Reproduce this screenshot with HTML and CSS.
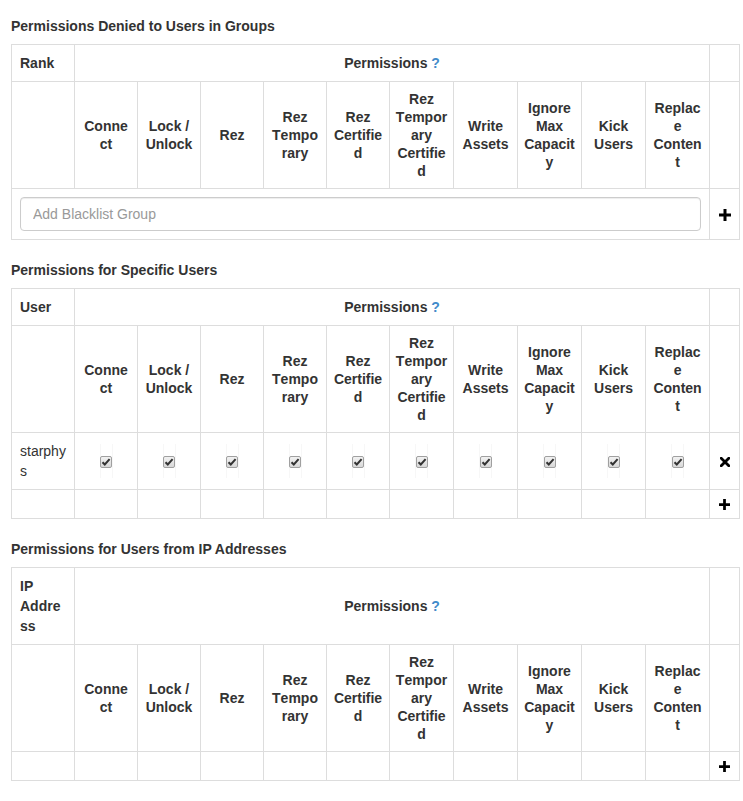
FILE: index.html
```html
<!DOCTYPE html>
<html lang="en">
<head>
<meta charset="utf-8">
<title>Permissions</title>
<link rel="stylesheet" href="styles.css">
</head>
<body>
<div class="page">

  <h4 class="section-title">Permissions Denied to Users in Groups</h4>
  <table class="perm-table">
    <colgroup>
      <col class="c63"><col class="c63"><col class="c63"><col class="c63"><col class="c63"><col class="c63">
      <col class="c64"><col class="c64"><col class="c64"><col class="c64"><col class="c64"><col class="c30">
    </colgroup>
    <thead>
      <tr class="head-top">
        <th class="name-col">Rank</th>
        <th colspan="10" class="perm-title">Permissions <span class="help">?</span></th>
        <th></th>
      </tr>
      <tr class="head-perms">
        <th></th>
        <th>Connect</th>
        <th>Lock / Unlock</th>
        <th>Rez</th>
        <th>Rez Temporary</th>
        <th>Rez Certified</th>
        <th>Rez Temporary Certified</th>
        <th>Write Assets</th>
        <th>Ignore Max Capacity</th>
        <th>Kick Users</th>
        <th>Replace Content</th>
        <th></th>
      </tr>
    </thead>
    <tbody>
      <tr class="input-row">
        <td colspan="11"><input class="form-control" type="text" placeholder="Add Blacklist Group"></td>
        <td class="icon-cell"><svg class="icon" width="12" height="12" viewBox="0 0 12 12"><path d="M4.5 0h3v4.5H12v3H7.5V12h-3V7.5H0v-3h4.5z" fill="#000"/></svg></td>
      </tr>
    </tbody>
  </table>

  <h4 class="section-title">Permissions for Specific Users</h4>
  <table class="perm-table">
    <colgroup>
      <col class="c63"><col class="c63"><col class="c63"><col class="c63"><col class="c63"><col class="c63">
      <col class="c64"><col class="c64"><col class="c64"><col class="c64"><col class="c64"><col class="c30">
    </colgroup>
    <thead>
      <tr class="head-top">
        <th class="name-col">User</th>
        <th colspan="10" class="perm-title">Permissions <span class="help">?</span></th>
        <th></th>
      </tr>
      <tr class="head-perms">
        <th></th>
        <th>Connect</th>
        <th>Lock / Unlock</th>
        <th>Rez</th>
        <th>Rez Temporary</th>
        <th>Rez Certified</th>
        <th>Rez Temporary Certified</th>
        <th>Write Assets</th>
        <th>Ignore Max Capacity</th>
        <th>Kick Users</th>
        <th>Replace Content</th>
        <th></th>
      </tr>
    </thead>
    <tbody>
      <tr class="user-row">
        <td class="name-cell">starphys</td>
        <td><span class="cb-wrap"><span class="cb"><svg width="10" height="10" viewBox="0 0 10 10"><path d="M1.5 5.2l2.3 2.3L8.6 2.2" fill="none" stroke="#333" stroke-width="2"/></svg></span></span></td>
        <td><span class="cb-wrap"><span class="cb"><svg width="10" height="10" viewBox="0 0 10 10"><path d="M1.5 5.2l2.3 2.3L8.6 2.2" fill="none" stroke="#333" stroke-width="2"/></svg></span></span></td>
        <td><span class="cb-wrap"><span class="cb"><svg width="10" height="10" viewBox="0 0 10 10"><path d="M1.5 5.2l2.3 2.3L8.6 2.2" fill="none" stroke="#333" stroke-width="2"/></svg></span></span></td>
        <td><span class="cb-wrap"><span class="cb"><svg width="10" height="10" viewBox="0 0 10 10"><path d="M1.5 5.2l2.3 2.3L8.6 2.2" fill="none" stroke="#333" stroke-width="2"/></svg></span></span></td>
        <td><span class="cb-wrap"><span class="cb"><svg width="10" height="10" viewBox="0 0 10 10"><path d="M1.5 5.2l2.3 2.3L8.6 2.2" fill="none" stroke="#333" stroke-width="2"/></svg></span></span></td>
        <td><span class="cb-wrap"><span class="cb"><svg width="10" height="10" viewBox="0 0 10 10"><path d="M1.5 5.2l2.3 2.3L8.6 2.2" fill="none" stroke="#333" stroke-width="2"/></svg></span></span></td>
        <td><span class="cb-wrap"><span class="cb"><svg width="10" height="10" viewBox="0 0 10 10"><path d="M1.5 5.2l2.3 2.3L8.6 2.2" fill="none" stroke="#333" stroke-width="2"/></svg></span></span></td>
        <td><span class="cb-wrap"><span class="cb"><svg width="10" height="10" viewBox="0 0 10 10"><path d="M1.5 5.2l2.3 2.3L8.6 2.2" fill="none" stroke="#333" stroke-width="2"/></svg></span></span></td>
        <td><span class="cb-wrap"><span class="cb"><svg width="10" height="10" viewBox="0 0 10 10"><path d="M1.5 5.2l2.3 2.3L8.6 2.2" fill="none" stroke="#333" stroke-width="2"/></svg></span></span></td>
        <td><span class="cb-wrap"><span class="cb"><svg width="10" height="10" viewBox="0 0 10 10"><path d="M1.5 5.2l2.3 2.3L8.6 2.2" fill="none" stroke="#333" stroke-width="2"/></svg></span></span></td>
        <td class="icon-cell"><svg class="icon" width="10" height="10" viewBox="0 0 10 10"><path d="M1.2 1.2L8.8 8.8M8.8 1.2L1.2 8.8" stroke="#000" stroke-width="2.8" stroke-linecap="square" fill="none"/></svg></td>
      </tr>
      <tr class="add-row">
        <td></td><td></td><td></td><td></td><td></td><td></td><td></td><td></td><td></td><td></td><td></td>
        <td class="icon-cell"><svg class="icon" width="12" height="12" viewBox="0 0 12 12"><path d="M4.5 0h3v4.5H12v3H7.5V12h-3V7.5H0v-3h4.5z" fill="#000"/></svg></td>
      </tr>
    </tbody>
  </table>

  <h4 class="section-title">Permissions for Users from IP Addresses</h4>
  <table class="perm-table">
    <colgroup>
      <col class="c63"><col class="c63"><col class="c63"><col class="c63"><col class="c63"><col class="c63">
      <col class="c64"><col class="c64"><col class="c64"><col class="c64"><col class="c64"><col class="c30">
    </colgroup>
    <thead>
      <tr class="head-top">
        <th class="name-col">IP Address</th>
        <th colspan="10" class="perm-title">Permissions <span class="help">?</span></th>
        <th></th>
      </tr>
      <tr class="head-perms">
        <th></th>
        <th>Connect</th>
        <th>Lock / Unlock</th>
        <th>Rez</th>
        <th>Rez Temporary</th>
        <th>Rez Certified</th>
        <th>Rez Temporary Certified</th>
        <th>Write Assets</th>
        <th>Ignore Max Capacity</th>
        <th>Kick Users</th>
        <th>Replace Content</th>
        <th></th>
      </tr>
    </thead>
    <tbody>
      <tr class="add-row">
        <td></td><td></td><td></td><td></td><td></td><td></td><td></td><td></td><td></td><td></td><td></td>
        <td class="icon-cell"><svg class="icon" width="12" height="12" viewBox="0 0 12 12"><path d="M4.5 0h3v4.5H12v3H7.5V12h-3V7.5H0v-3h4.5z" fill="#000"/></svg></td>
      </tr>
    </tbody>
  </table>

</div>
</body>
</html>
```

FILE: styles.css
```css
html, body {
  margin: 0;
  padding: 0;
  background: #fff;
}

body {
  font-family: "Liberation Sans", Arial, Helvetica, sans-serif;
  font-size: 14px;
  line-height: 20px;
  color: #333;
}

.page {
  padding: 0 0 0 11px;
}

.section-title {
  margin: 16px 0 8px 0;
  font-size: 14px;
  line-height: 20px;
  font-weight: bold;
}

.perm-table + .section-title {
  margin-top: 20px;
}

.perm-table {
  border-collapse: collapse;
  table-layout: fixed;
  width: 729px;
  margin: 0;
}

.c63 { width: 63px; }
.c64 { width: 64px; }
.c30 { width: 30px; }

.perm-table th,
.perm-table td {
  border: 1px solid #ddd;
  padding: 8px;
  vertical-align: middle;
  line-height: 20px;
}

.perm-table th {
  font-weight: bold;
  text-align: left;
}

.perm-title {
  text-align: center !important;
}

.help {
  color: #428bca;
}

.name-col {
  overflow-wrap: break-word;
}

.head-perms th {
  padding: 8px 5.75px;
  line-height: 18px;
  text-align: center;
  overflow-wrap: break-word;
  font-kerning: none;
}

.name-cell {
  overflow-wrap: break-word;
}

.form-control {
  display: block;
  box-sizing: border-box;
  width: 100%;
  height: 34px;
  padding: 6px 12px;
  margin: 0;
  font-family: inherit;
  font-size: 14px;
  line-height: 20px;
  color: #555;
  background: #fff;
  border: 1px solid #ccc;
  border-radius: 4px;
  box-shadow: inset 0 1px 1px rgba(0, 0, 0, 0.075);
}

.form-control::placeholder {
  color: #999;
}

.icon-cell {
  text-align: center;
  padding: 8px 0 !important;
}

.icon {
  display: block;
  margin: 0 auto;
}

.input-row .icon {
  margin-top: 2px;
}

.user-row .icon {
  margin-top: 2px;
}

.user-row td:not(.name-cell):not(.icon-cell) {
  text-align: center;
}

.cb-wrap {
  display: inline-flex;
  align-items: center;
  justify-content: center;
  box-sizing: border-box;
  width: 13px;
  height: 34px;
  padding-top: 2px;
  vertical-align: middle;
  border-left: 1px solid #f7f7f7;
  border-right: 1px solid #f7f7f7;
}

.cb {
  display: flex;
  align-items: center;
  justify-content: center;
  box-sizing: border-box;
  width: 12px;
  height: 12px;
  border: 1px solid #a0a0a0;
  border-radius: 2px;
  background: linear-gradient(#f2f2f2, #d8d8d8);
}

.add-row td {
  height: 12px;
  padding-top: 8px;
  padding-bottom: 8px;
}

.add-row .icon {
  margin-top: 1px;
  width: 11px;
  height: 11px;
}
```
